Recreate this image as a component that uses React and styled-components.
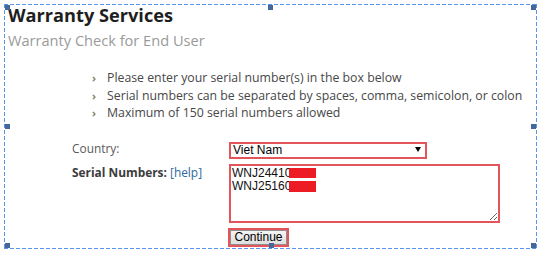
import React from "react";
import styled, { createGlobalStyle } from "styled-components";

const GlobalStyle = createGlobalStyle`
  html, body { margin: 0; padding: 0; background: #fff; }
  body { font-family: "Open Sans", "Liberation Sans", sans-serif; }
`;

const dash = "#5596ec";

const Frame = styled.div`
  position: relative;
  box-sizing: border-box;
  margin: 4px 0 0 4px;
  width: 533px;
  height: 245px;
  padding: 1px 0 0 4px;
  background:
    repeating-linear-gradient(90deg, ${dash} 0 4px, transparent 4px 6px) top left / 100% 1px no-repeat,
    repeating-linear-gradient(90deg, ${dash} 0 4px, transparent 4px 6px) bottom left / 100% 1px no-repeat,
    repeating-linear-gradient(180deg, ${dash} 0 4px, transparent 4px 6px) top left / 1px 100% no-repeat,
    repeating-linear-gradient(180deg, ${dash} 0 4px, transparent 4px 6px) top right / 1px 100% no-repeat;
`;

const Handle = styled.span`
  position: absolute;
  left: ${(p) => p.$x}px;
  top: ${(p) => p.$y}px;
  width: 5px;
  height: 5px;
  background: #46679a;
`;

const Title = styled.h1`
  margin: 0;
  font-size: 18.2px;
  line-height: 20px;
  font-weight: 700;
  color: #1e1e1e;
`;

const Subtitle = styled.h2`
  margin: 6px 0 0;
  font-size: 14.6px;
  line-height: 18px;
  font-weight: 400;
  color: #9a9a9a;
`;

const List = styled.ul`
  list-style: none;
  margin: 20px 0 0 84px;
  padding: 0;
`;

const Item = styled.li`
  display: flex;
  font-size: 12.3px;
  line-height: 17.5px;
  color: #474747;
`;

const Marker = styled.span`
  width: 15px;
  flex: none;
  color: #8a826a;
  font-size: 11px;
  font-weight: 700;
`;

const Form = styled.form`
  display: grid;
  grid-template-columns: 157px auto;
  row-gap: 5px;
  margin: 20.5px 0 0 64px;
  justify-items: start;
`;

const Label = styled.label`
  font-size: 11.9px;
  line-height: 13px;
  padding-top: ${(p) => p.$pad || 0}px;
  color: ${(p) => (p.$strong ? "#3c3c3c" : "#5a5a5a")};
  font-weight: ${(p) => (p.$strong ? 700 : 400)};
`;

const HelpLink = styled.a`
  font-weight: 400;
  color: #2e6a9c;
  text-decoration: none;
`;

const controlFont = `"Liberation Sans", Arial, sans-serif`;
const red = "#e4555b";

const SelectWrap = styled.div`
  position: relative;
  width: 198px;
  height: 17px;
`;

const Select = styled.select`
  appearance: none;
  display: block;
  box-sizing: border-box;
  width: 100%;
  height: 100%;
  margin: 0;
  padding: 0 0 0 2px;
  border: 2px solid ${red};
  border-radius: 0;
  background: #fff;
  font-family: ${controlFont};
  font-size: 12px;
  line-height: 13px;
  color: #000;
  outline: none;
`;

const Arrow = styled.svg`
  position: absolute;
  right: 6px;
  top: 5px;
  pointer-events: none;
`;

const AreaWrap = styled.div`
  position: relative;
  width: 271px;
  height: 59px;
`;

const Area = styled.textarea`
  box-sizing: border-box;
  display: block;
  width: 100%;
  height: 100%;
  margin: 0;
  padding: 1px 1px;
  border: 2px solid ${red};
  border-radius: 0;
  font-family: ${controlFont};
  font-size: 12px;
  line-height: 13px;
  color: #111;
  outline: none;
`;

const Redact = styled.span`
  position: absolute;
  left: 60px;
  top: ${(p) => p.$top}px;
  width: 27px;
  height: ${(p) => p.$h}px;
  background: #ed1c24;
`;

const Button = styled.button`
  grid-column: 2;
  box-sizing: border-box;
  width: 61px;
  height: 19px;
  margin: 0 0 0 -1px;
  padding: 0;
  border: 2px solid ${red};
  border-radius: 0;
  box-shadow: inset 0 0 0 1px #8f8f8f;
  background: linear-gradient(#f7f7f7, #dcdcdc);
  font-family: ${controlFont};
  font-size: 12px;
  line-height: 15px;
  color: #000;
`;

const handles = [
  [1, 1], [264, 1], [527, 1],
  [1, 120], [527, 120],
  [1, 239], [265, 239], [527, 239],
];

export default function App() {
  return (
    <>
      <GlobalStyle />
      <Frame>
        <Title>Warranty Services</Title>
        <Subtitle>Warranty Check for End User</Subtitle>
        <List>
          <Item><Marker>›</Marker>Please enter your serial number(s) in the box below</Item>
          <Item><Marker>›</Marker>Serial numbers can be separated by spaces, comma, semicolon, or colon</Item>
          <Item><Marker>›</Marker>Maximum of 150 serial numbers allowed</Item>
        </List>
        <Form onSubmit={(e) => e.preventDefault()}>
          <Label htmlFor="country">Country:</Label>
          <SelectWrap>
            <Select id="country" defaultValue="VN">
              <option value="VN">Viet Nam</option>
            </Select>
            <Arrow width="6" height="5" viewBox="0 0 6 5">
              <polygon points="0,0 6,0 3,5" fill="#000" />
            </Arrow>
          </SelectWrap>
          <Label $strong $pad={2} htmlFor="serials">
            Serial Numbers: <HelpLink href="#">[help]</HelpLink>
          </Label>
          <AreaWrap>
            <Area id="serials" defaultValue={"WNJ24410\nWNJ25160"} spellCheck={false} />
            <Redact $top={4} $h={10} />
            <Redact $top={17} $h={11} />
          </AreaWrap>
          <Button type="submit">Continue</Button>
        </Form>
        {handles.map(([x, y], i) => (
          <Handle key={i} $x={x} $y={y} />
        ))}
      </Frame>
    </>
  );
}
